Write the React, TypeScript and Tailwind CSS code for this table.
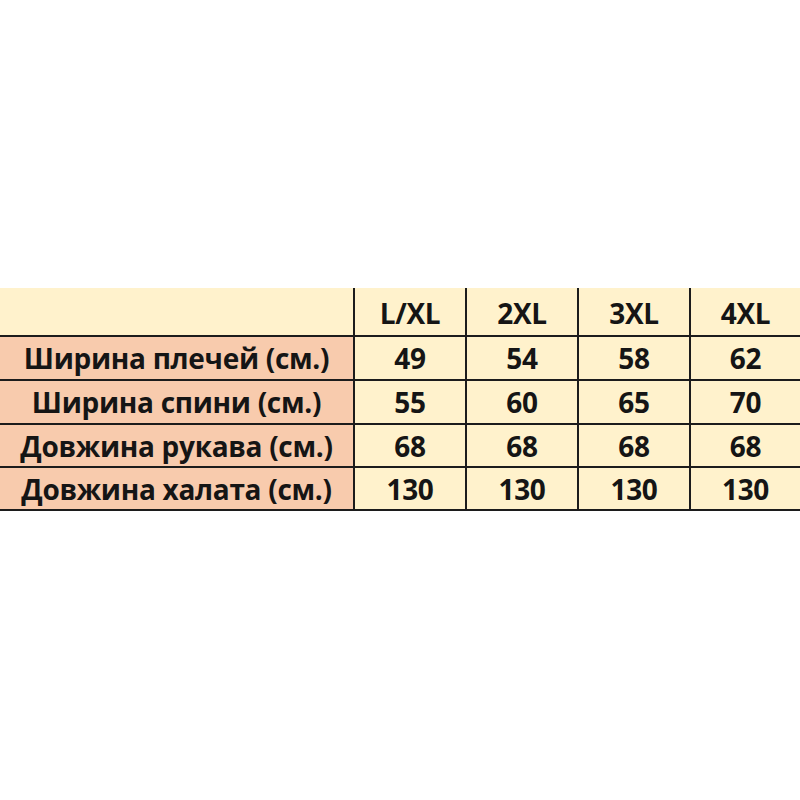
const sizes = ['L/XL', '2XL', '3XL', '4XL'];

const rows = [
  { label: 'Ширина плечей (см.)', values: ['49', '54', '58', '62'] },
  { label: 'Ширина спини (см.)', values: ['55', '60', '65', '70'] },
  { label: 'Довжина рукава (см.)', values: ['68', '68', '68', '68'] },
  { label: 'Довжина халата (см.)', values: ['130', '130', '130', '130'] },
];

export default function App() {
  return (
    <div className="w-[800px] h-[800px] bg-white pt-[288px]" style={{ fontFamily: '"Open Sans", "Noto Sans", sans-serif' }}>
      <div className="grid grid-cols-[353px_110px_110px_110px_1fr] grid-rows-[47px_42px_42px_41px_41px] gap-[2px] bg-[#1c1c1c] pb-[2px] text-[28px] leading-none font-bold text-[#151515] tracking-[-0.3px]">
        <div className="bg-[#FFF2CC]" />
        {sizes.map((s) => (
          <div key={s} className="bg-[#FFF2CC] flex items-center justify-center pt-[2px]">{s}</div>
        ))}
        {rows.map((r) => (
          <div key={r.label} className="contents">
            <div className="bg-[#F8CBAD] flex items-center justify-center">{r.label}</div>
            {r.values.map((v, i) => (
              <div key={i} className="bg-[#FFF2CC] flex items-center justify-center">{v}</div>
            ))}
          </div>
        ))}
      </div>
    </div>
  );
}
